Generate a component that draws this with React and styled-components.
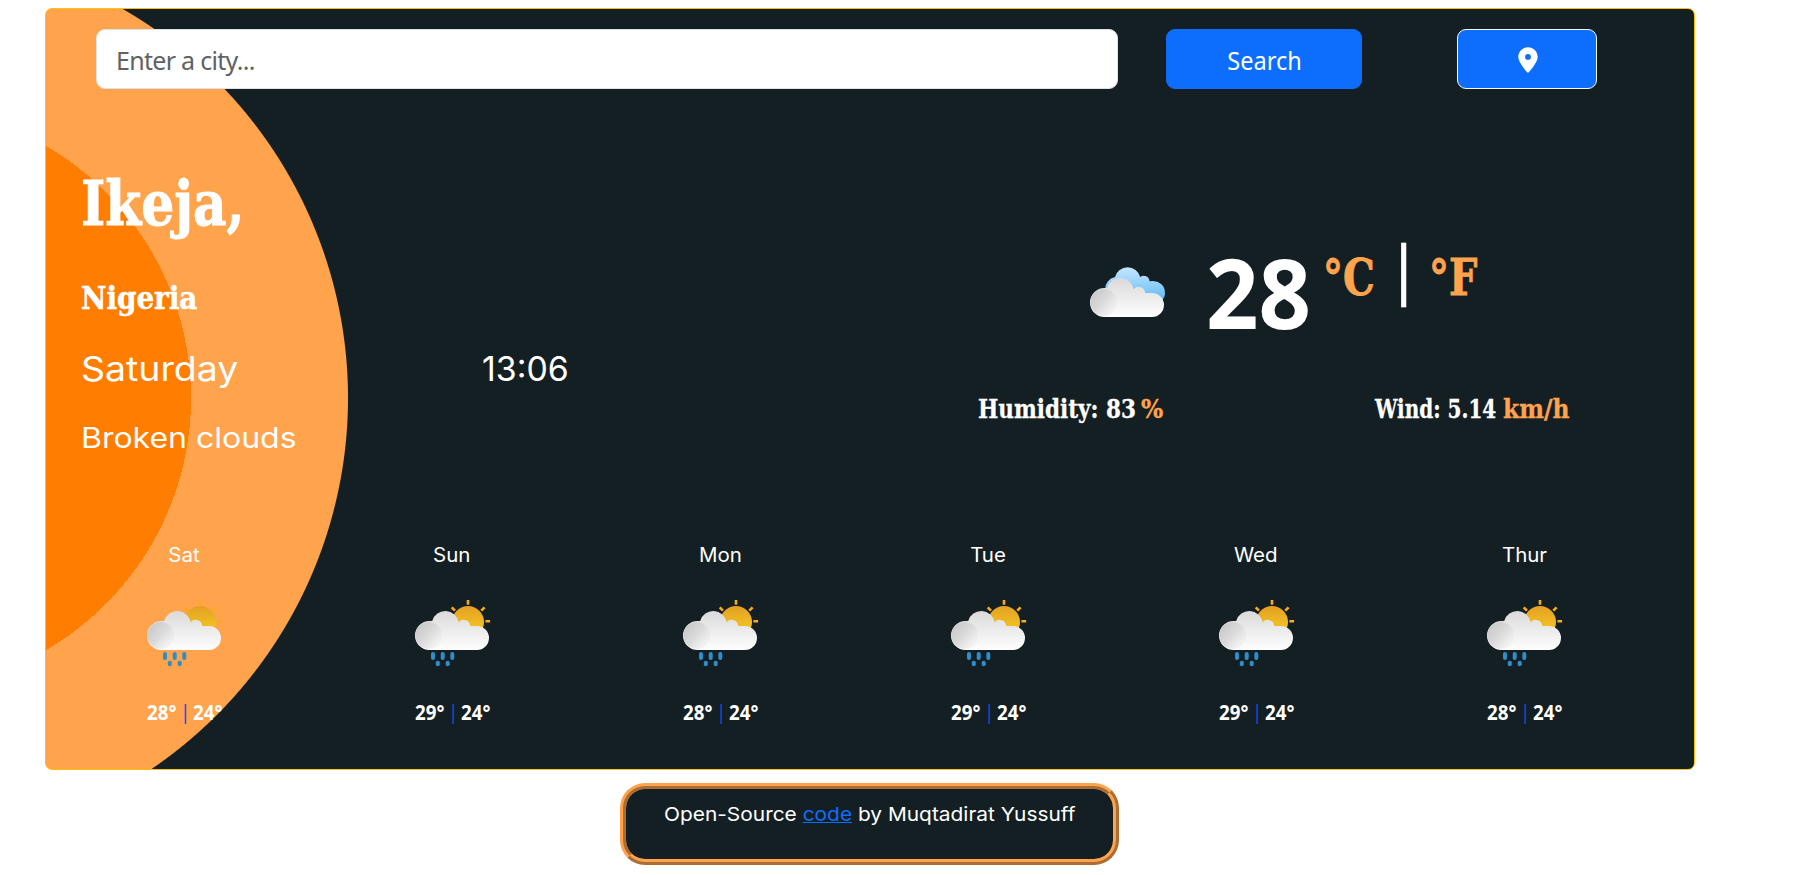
import React from 'react';
import styled, { createGlobalStyle } from 'styled-components';

const slab = '"DejaVu Serif Condensed", "DejaVu Serif", serif';
const humanist = '"Noto Sans", "Open Sans", sans-serif';
const geometric = 'Inter, "Noto Sans", sans-serif';

const GlobalStyle = createGlobalStyle`
  *, *::before, *::after { box-sizing: border-box; }
  body { margin: 0; background: #fff; overflow: hidden; }
`;

const Page = styled.div`
  width: 1811px;
  height: 875px;
  padding: 8px 0 0 45px;
`;

const Card = styled.main`
  width: 1650px;
  height: 762px;
  border: 1px solid #ffc107;
  border-radius: 7px;
  color: #fff;
  background:
    radial-gradient(circle at -146.5px 389px,
      #ff7d00 291.5px, #ffa34d 291.5px, #ffa34d 448px, #141f24 449px);
`;

/* Text set a little narrower or wider than the face's natural width */
const Fit = styled.span`
  display: inline-block;
  white-space: pre;
  transform: scaleX(${p => p.$x || 1});
  transform-origin: ${p => p.$origin || 'left'} center;
`;

const SearchBar = styled.form`
  display: flex;
  height: 80px;
  padding: 20px 0 0 50px;
`;

const CityInput = styled.input`
  width: 1022px;
  height: 60px;
  margin-right: 48px;
  padding: 1px 0 0 19px;
  border: 1px solid #dee2e6;
  border-radius: 9px;
  outline: none;
  background: #fff;
  font: 400 25px ${humanist};
  letter-spacing: -0.7px;
  &::placeholder { color: #5f6265; opacity: 1; }
`;

const Button = styled.button`
  display: flex;
  align-items: center;
  justify-content: center;
  width: ${p => p.$width}px;
  height: 60px;
  padding: 1px 0 0 1px;
  border: 1px solid ${p => (p.$outlined ? '#f8f9fa' : '#0d6efd')};
  border-radius: 9px;
  background: #0d6efd;
  color: #fff;
  font: 400 25px/36px ${humanist};
  & + & { margin-left: 95px; }
`;

const Current = styled.section`
  display: flex;
  height: 452px;
`;

const Place = styled.div`
  width: 880px;
  padding: 77px 0 0 35px;
`;

const City = styled.h1`
  margin: 0 0 36px;
  font: bold 62px/76px ${slab};
  -webkit-text-stroke: 1px currentColor;
`;

const Country = styled.h2`
  margin: 0 0 29px;
  font: bold 32px/40px ${slab};
  -webkit-text-stroke: 0.5px currentColor;
`;

const DayTime = styled.div`
  display: flex;
  margin-bottom: 28px;
  font: 400 33.5px/44px ${geometric};
`;

const DayName = styled.div`
  width: 400.5px;
`;

const Conditions = styled.div`
  font: 400 28.5px/38px ${geometric};
`;

const Reading = styled.div`
  flex: 1;
  padding-top: 138px;
`;

const TemperatureRow = styled.div`
  display: flex;
  height: 130px;
  padding-left: 151px;
`;

const MainIcon = styled.div`
  width: 129px;
  padding-top: 24px;
`;

const Temperature = styled.div`
  width: 117px;
  font: bold 96px/130px ${humanist};
`;

const Unit = styled.div`
  width: ${p => p.$width}px;
  padding-top: 20px;
  color: #ffa34d;
  font: bold 51px/60px ${slab};
  -webkit-text-stroke: 0.8px currentColor;
`;

const UnitDivider = styled.div`
  width: 43px;
  padding-top: 9px;
  font: 400 64px/64px ${humanist};
  -webkit-text-stroke: 0.5px currentColor;
`;

const Metrics = styled.div`
  display: flex;
  padding: 35px 0 0 52px;
  font: bold 26px/34px ${slab};
  -webkit-text-stroke: 0.3px currentColor;
`;

const MetricLabel = styled.div`
  width: ${p => p.$width}px;
`;

const MetricUnit = styled.div`
  width: ${p => p.$width}px;
  color: #ffa34d;
`;

const Forecast = styled.section`
  display: grid;
  grid-template-columns: repeat(6, 268px);
  padding-left: 4px;
`;

const ForecastDay = styled.div`
  display: flex;
  flex-direction: column;
  align-items: center;
`;

const ForecastName = styled.div`
  height: 43px;
  font: 400 19.5px/28px ${geometric};
`;

const Range = styled.div`
  display: flex;
  width: 74px;
  margin-top: 14px;
  font: bold 21px/28px ${humanist};
`;

const RangeValue = styled.div`
  flex: none;
  width: 33px;
`;

const RangeDivider = styled.div`
  flex: none;
  width: 13px;
  color: #0d52d8;
  font-weight: 400;
  font-size: 19px;
`;

const Footer = styled.footer`
  width: 499px;
  height: 82px;
  margin: 13px 0 0 575px;
  padding: 10px 0 0 38px;
  border: 6px ridge #ffa34d;
  border-radius: 25px;
  background: #141f24;
  color: #fff;
  font: 400 19.3px/30px ${geometric};
`;

const Link = styled.a`
  color: #0d6efd;
  text-decoration: underline;
`;

const Svg = styled.svg`
  display: block;
  flex: none;
`;

function PinIcon() {
  return (
    <Svg width="20" height="26" viewBox="0 0 20 26">
      <path fill="#fff" fillRule="evenodd" d="M10 .3C4.600 .3.300 4.600.300 10c0 4.300 5.600 11.600 8.600 15.100a1.400 1.400 0 0 0 2.200 0C14.100 21.600 19.700 14.300 19.700 10 19.700 4.600 15.400.300 10 .3Zm0 12.500a2.900 2.900 0 1 1 0-5.800 2.900 2.900 0 0 1 0 5.800Z" />
    </Svg>
  );
}

function FrontCloud({ id }) {
  return (
    <>
      <defs>
        <linearGradient id={`${id}-body`} gradientUnits="userSpaceOnUse" x1="0" y1="27" x2="0" y2="66">
          <stop offset="0" stopColor="#dadada" />
          <stop offset="1" stopColor="#fefefe" />
        </linearGradient>
        <linearGradient id={`${id}-puff`} x1="0.1" y1="0.15" x2="0.85" y2="0.8">
          <stop offset="0" stopColor="#c9c9c9" />
          <stop offset="0.5" stopColor="#dadada" />
          <stop offset="1" stopColor="#ededed" stopOpacity="0.6" />
        </linearGradient>
      </defs>
      <path
        fill={`url(#${id}-body)`}
        d="M27.500 66A14.500 14.500 0 0 1 27.500 37H30.200A13.600 13.600 0 0 1 56.700 38.300A6.500 6.500 0 0 1 68.200 42H75A12 12 0 0 1 75 66Z"
      />
      <circle cx="26.800" cy="51.500" r="13.500" fill={`url(#${id}-puff)`} />
    </>
  );
}

function RainIcon({ id }) {
  return (
    <Svg width="100" height="100" viewBox="0 0 100 100">
      <defs>
        <linearGradient id={`${id}-sun`} x1="0" y1="0" x2="0" y2="1">
          <stop offset="0" stopColor="#e3a024" />
          <stop offset="0.8" stopColor="#f6c722" />
        </linearGradient>
      </defs>
      <g stroke="#f9ab1c" strokeWidth="2.600">
        <path d="M66 16v4.700M83.400 37.300h4.700M79.300 26.700l3.300-3.300M53 26.700l-3.300-3.300" />
      </g>
      <circle cx="66" cy="38" r="16" fill={`url(#${id}-sun)`} />
      <FrontCloud id={id} />
      <g fill="#2c8ecb">
        <rect x="29" y="68" width="4" height="8" rx="1.900" />
        <rect x="38.700" y="68" width="4" height="8" rx="1.900" />
        <rect x="48.300" y="68" width="4" height="8" rx="1.900" />
        <rect x="33.800" y="76.700" width="4" height="5.500" rx="1.900" />
        <rect x="43.700" y="76.700" width="4" height="5.500" rx="1.900" />
      </g>
    </Svg>
  );
}

function CloudsIcon() {
  return (
    <Svg width="100" height="100" viewBox="0 0 100 100">
      <defs>
        <linearGradient id="sky" gradientUnits="userSpaceOnUse" x1="0" y1="17" x2="0" y2="55">
          <stop offset="0" stopColor="#c4e6ff" />
          <stop offset="1" stopColor="#4fb3f2" />
        </linearGradient>
      </defs>
      <path
        fill="url(#sky)"
        d="M38 26A12.800 12.800 0 0 0 38 51H76A11.500 11.500 0 0 0 76.500 30.200H72.500A5.700 5.700 0 0 0 63.200 26A13 13 0 0 0 38 26Z"
      />
      <circle cx="76.500" cy="41.700" r="11.500" fill="url(#sky)" />
      <FrontCloud id="now" />
    </Svg>
  );
}

const forecast = [
  ['Sat', 28, 24],
  ['Sun', 29, 24],
  ['Mon', 28, 24],
  ['Tue', 29, 24],
  ['Wed', 29, 24],
  ['Thur', 28, 24],
];

export default function App() {
  return (
    <Page>
      <GlobalStyle />
      <Card>
        <SearchBar>
          <CityInput placeholder="Enter a city..." />
          <Button type="button" $width={196}><Fit $x={0.94} $origin="center">Search</Fit></Button>
          <Button type="button" $width={140} $outlined aria-label="Use my location"><PinIcon /></Button>
        </SearchBar>

        <Current>
          <Place>
            <City><Fit $x={0.93}>Ikeja,</Fit></City>
            <Country><Fit $x={0.966}>Nigeria</Fit></Country>
            <DayTime>
              <DayName><Fit $x={1.117}>Saturday</Fit></DayName>
              <Fit $x={1.01}>13:06</Fit>
            </DayTime>
            <Conditions><Fit $x={1.122}>Broken clouds</Fit></Conditions>
          </Place>

          <Reading>
            <TemperatureRow>
              <MainIcon><CloudsIcon /></MainIcon>
              <Temperature><Fit $x={0.957}>28</Fit></Temperature>
              <Unit $width={63}><Fit $x={0.87}>°C</Fit></Unit>
              <UnitDivider>|</UnitDivider>
              <Unit $width={60}><Fit $x={0.87}>°F</Fit></Unit>
            </TemperatureRow>
            <Metrics>
              <MetricLabel $width={163}><Fit $x={0.92}>Humidity: 83</Fit></MetricLabel>
              <MetricUnit $width={234}>%</MetricUnit>
              <MetricLabel $width={128}><Fit $x={0.855}>Wind: 5.14</Fit></MetricLabel>
              <MetricUnit $width={70}>km/h</MetricUnit>
            </Metrics>
          </Reading>
        </Current>

        <Forecast>
          {forecast.map(([name, high, low]) => (
            <ForecastDay key={name}>
              <ForecastName><Fit $x={1.05} $origin="center">{name}</Fit></ForecastName>
              <RainIcon id={name} />
              <Range>
                <RangeValue><Fit $x={0.89}>{high}°</Fit></RangeValue>
                <RangeDivider>|</RangeDivider>
                <RangeValue><Fit $x={0.89}>{low}°</Fit></RangeValue>
              </Range>
            </ForecastDay>
          ))}
        </Forecast>
      </Card>
      <Footer>
        <Fit $x={1.083}>Open-Source <Link href="#">code</Link> by Muqtadirat Yussuff</Fit>
      </Footer>
    </Page>
  );
}
